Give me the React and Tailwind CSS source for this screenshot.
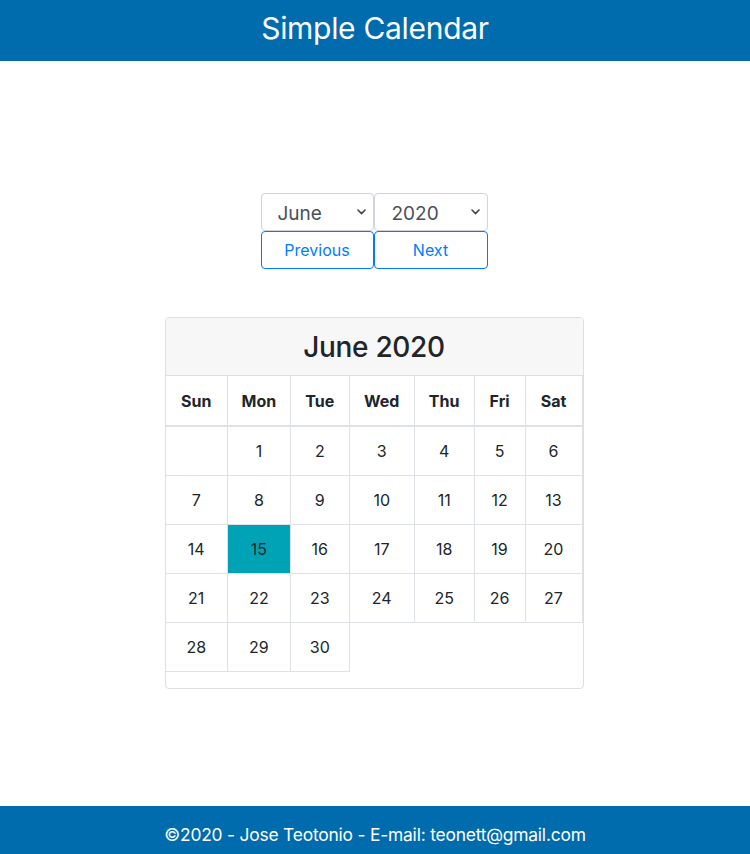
import { useState } from "react";

const MONTHS = [
  "January", "February", "March", "April", "May", "June",
  "July", "August", "September", "October", "November", "December",
];
const DAYS = ["Sun", "Mon", "Tue", "Wed", "Thu", "Fri", "Sat"];
const COLS = ["w-[62px]", "w-[63px]", "w-[59px]", "w-[65px]", "w-[60px]", "w-[51px]", "w-[57px]"];

const Chevron = () => (
  <svg
    className="pointer-events-none absolute right-[8px] top-1/2 -translate-y-1/2"
    width="9"
    height="6"
    viewBox="0 0 9 6"
    fill="none"
  >
    <path d="M1 1l3.5 3.5L8 1" stroke="#444" strokeWidth="1.6" strokeLinecap="round" />
  </svg>
);

const buildWeeks = (month, year) => {
  const first = new Date(year, month, 1).getDay();
  const total = new Date(year, month + 1, 0).getDate();
  const weeks = [];
  let week = Array(first).fill(null);
  for (let d = 1; d <= total; d++) {
    week.push(d);
    if (week.length === 7) {
      weeks.push(week);
      week = [];
    }
  }
  if (week.length) weeks.push(week);
  return weeks;
};

const App = () => {
  const [month, setMonth] = useState(5);
  const [year, setYear] = useState(2020);
  const weeks = buildWeeks(month, year);

  const prev = () => {
    if (month === 0) {
      setMonth(11);
      setYear(year - 1);
    } else setMonth(month - 1);
  };
  const next = () => {
    if (month === 11) {
      setMonth(0);
      setYear(year + 1);
    } else setMonth(month + 1);
  };

  return (
    <div className="min-h-screen flex flex-col bg-white text-[#212529] font-['Inter','Liberation_Sans',sans-serif]">
      <header className="h-[61px] bg-[#006bad] flex items-center justify-center pb-[6px]">
        <h1 className="text-white text-[30px] leading-none tracking-[-0.3px]">Simple Calendar</h1>
      </header>

      <main className="flex-1 flex flex-col items-center pt-[132px] pr-[2px]">
        <div className="flex flex-col">
          <div className="flex">
            <div className="relative">
              <select
                value={month}
                onChange={(e) => setMonth(Number(e.target.value))}
                className="appearance-none w-[113px] h-[38px] pl-[16px] pr-6 pt-[4px] pb-0 border border-[#ced4da] rounded-[4px] bg-white text-[19px] text-[#495057] outline-none"
              >
                {MONTHS.map((m, i) => (
                  <option key={m} value={i}>{m}</option>
                ))}
              </select>
              <Chevron />
            </div>
            <div className="relative">
              <select
                value={year}
                onChange={(e) => setYear(Number(e.target.value))}
                className="appearance-none w-[114px] h-[38px] pl-[17px] pr-6 pt-[4px] pb-0 border border-[#ced4da] rounded-[4px] bg-white text-[19px] text-[#495057] outline-none"
              >
                {[2017, 2018, 2019, 2020, 2021, 2022, 2023].map((y) => (
                  <option key={y} value={y}>{y}</option>
                ))}
              </select>
              <Chevron />
            </div>
          </div>
          <div className="flex">
            <button
              onClick={prev}
              className="w-[113px] h-[38px] border border-[#007bff] rounded-[4px] text-[#007bff] text-[16px]"
            >
              Previous
            </button>
            <button
              onClick={next}
              className="w-[114px] h-[38px] border border-[#007bff] rounded-[4px] text-[#007bff] text-[16px]"
            >
              Next
            </button>
          </div>
        </div>

        <div className="mt-[48px] w-[419px] border border-[#dfdfdf] rounded-[4px] overflow-hidden">
          <div className="h-[58px] bg-[#f7f7f7] border-b border-[#dfdfdf] flex items-center justify-center">
            <h3 className="text-[28px] font-medium leading-none tracking-[-0.3px]">
              {MONTHS[month]} {year}
            </h3>
          </div>
          <table className="border-collapse mb-4 text-center text-[16px]">
            <thead>
              <tr>
                {DAYS.map((d, i) => (
                  <th
                    key={d}
                    className={`${COLS[i]} h-[50px] p-0 font-bold border border-[#dee2e6] border-b-2 border-t-0 ${i === 0 ? "border-l-0" : ""}`}
                  >
                    {d}
                  </th>
                ))}
              </tr>
            </thead>
            <tbody>
              {weeks.map((w, wi) => (
                <tr key={wi}>
                  {w.map((d, di) => (
                    <td
                      key={di}
                      className={`h-[49px] p-0 border border-[#dee2e6] ${di === 0 ? "border-l-0" : ""} ${
                        d === 15 && month === 5 && year === 2020 ? "bg-[#00a3b6]" : ""
                      }`}
                    >
                      {d}
                    </td>
                  ))}
                </tr>
              ))}
            </tbody>
          </table>
        </div>
      </main>

      <footer className="h-[48px] bg-[#006bad] flex items-center justify-center pt-[10px]">
        <p className="text-white text-[17.4px] leading-none tracking-[-0.2px]">
          ©2020 - Jose Teotonio - E-mail: teonett@gmail.com
        </p>
      </footer>
    </div>
  );
};

export default App;
